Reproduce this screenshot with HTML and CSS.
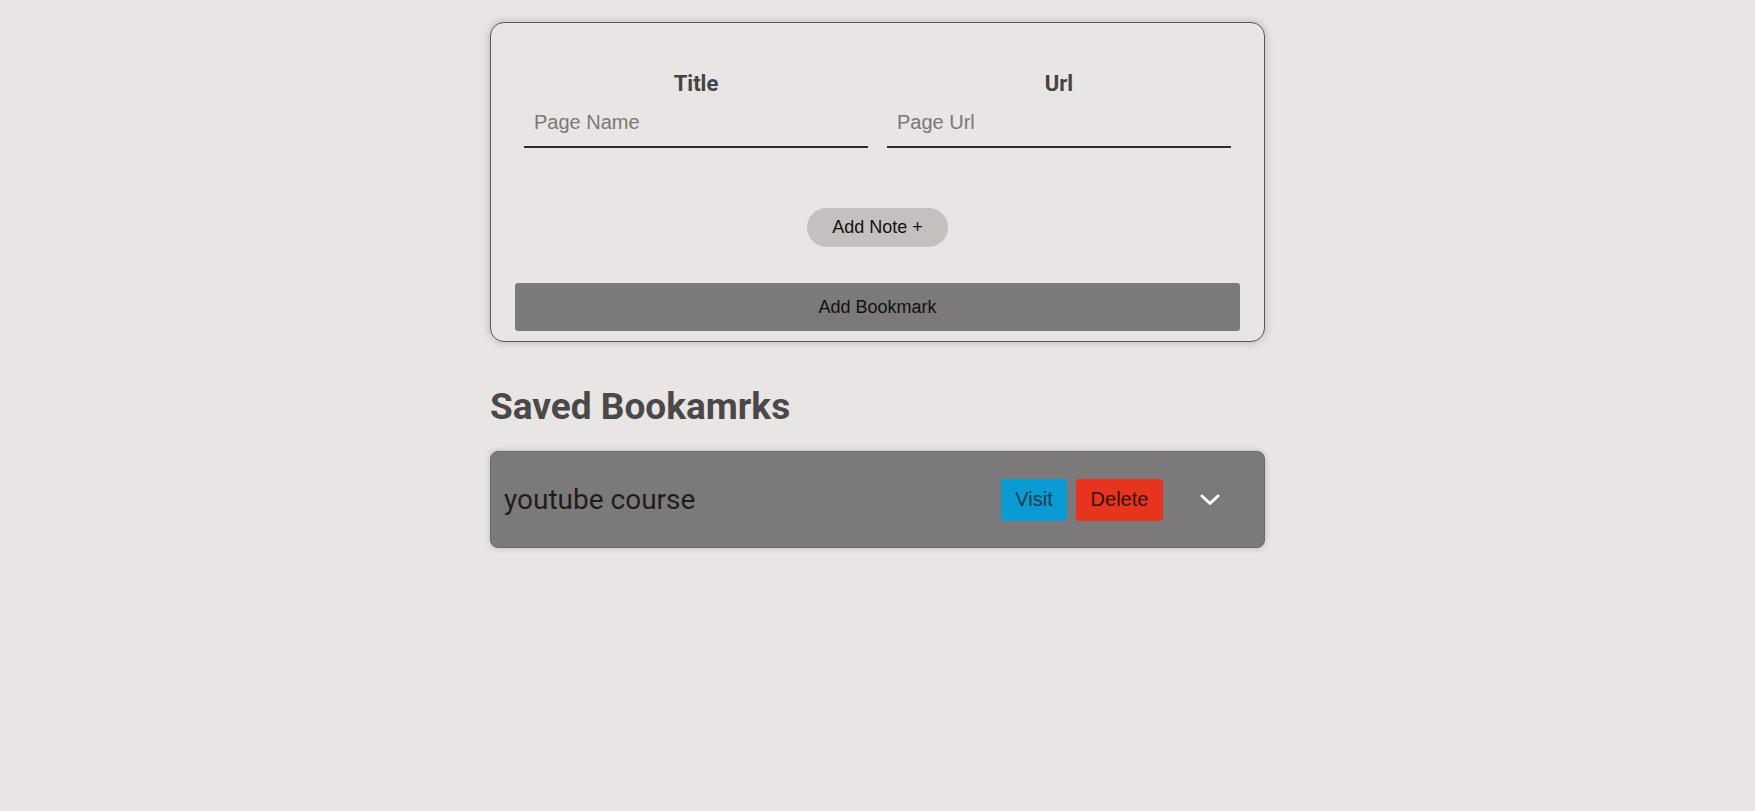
FILE: index.html
```html
<!DOCTYPE html>
<html lang="en">
<head>
<meta charset="utf-8">
<title>Bookmarks</title>
<link rel="stylesheet" href="styles.css">
</head>
<body>
<main class="page">
  <form class="card">
    <div class="fields">
      <label class="field">
        <span class="field-label">Title</span>
        <input class="field-input" type="text" placeholder="Page Name">
      </label>
      <label class="field">
        <span class="field-label">Url</span>
        <input class="field-input" type="text" placeholder="Page Url">
      </label>
    </div>
    <div class="note-row">
      <button type="button" class="note-btn">Add Note +</button>
    </div>
    <button type="button" class="add-btn">Add Bookmark</button>
  </form>

  <h2 class="section-title">Saved Bookamrks</h2>

  <div class="bookmark">
    <span class="bookmark-name">youtube course</span>
    <div class="bookmark-actions">
      <button type="button" class="visit-btn">Visit</button>
      <button type="button" class="delete-btn">Delete</button>
    </div>
    <button type="button" class="toggle-btn" aria-label="Expand">
      <svg width="20" height="12" viewBox="0 0 20 12"><polyline points="2,2 10,9.5 18,2" fill="none" stroke="#ffffff" stroke-width="3" stroke-linecap="round" stroke-linejoin="round"/></svg>
    </button>
  </div>
</main>
</body>
</html>
```

FILE: styles.css
```css
* { box-sizing: border-box; }

html, body {
  margin: 0;
  padding: 0;
  background: #e8e5e4;
}

body {
  font-family: "Liberation Sans", Arial, sans-serif;
  min-height: 811px;
}

.page {
  width: 775px;
  margin: 0 auto;
  padding-top: 22px;
}

.card {
  display: flex;
  flex-direction: column;
  border: 1px solid #5a5858;
  border-radius: 14px;
  background: #e8e5e4;
  box-shadow: 0 0 8px rgba(0, 0, 0, 0.22);
  padding: 47px 24px 10px 24px;
}

.fields {
  display: flex;
  gap: 19px;
  padding: 0 9px;
}

.field {
  flex: 1;
  display: flex;
  flex-direction: column;
  align-items: stretch;
}

.field-label {
  font-family: Roboto, "Liberation Sans", sans-serif;
  font-weight: 700;
  font-size: 22px;
  line-height: 28px;
  color: #454343;
  text-align: center;
}

.field-input {
  height: 50px;
  border: none;
  border-bottom: 2px solid #2e2c2c;
  background: transparent;
  font-family: "Liberation Sans", Arial, sans-serif;
  font-size: 20px;
  padding: 0 10px;
  color: #333;
  outline: none;
}

.field-input::placeholder {
  color: #7a7878;
}

.note-row {
  display: flex;
  justify-content: center;
  margin-top: 60px;
}

.note-btn {
  width: 141px;
  height: 39px;
  border: none;
  border-radius: 20px;
  background: #c4c0bf;
  font-family: "Liberation Sans", Arial, sans-serif;
  font-size: 18px;
  color: #111;
  padding: 0;
}

.add-btn {
  margin-top: 36px;
  height: 48px;
  border: none;
  border-radius: 3px;
  background: #7b7979;
  font-family: "Liberation Sans", Arial, sans-serif;
  font-size: 18px;
  color: #111;
}

.section-title {
  font-family: Roboto, "Liberation Sans", sans-serif;
  font-weight: 700;
  font-size: 37px;
  line-height: 43px;
  color: #4a4848;
  margin: 43px 0 23px 0;
}

.bookmark {
  display: flex;
  align-items: center;
  height: 97px;
  background: #7b7979;
  border: 1px solid #6a6868;
  border-radius: 8px;
  box-shadow: 0 0 6px rgba(0, 0, 0, 0.2);
  padding: 0 44px 0 13px;
}

.bookmark-name {
  flex: 1;
  font-family: Roboto, "Liberation Sans", sans-serif;
  font-size: 28px;
  color: #1e1d1d;
}

.bookmark-actions {
  display: flex;
  gap: 9px;
}

.visit-btn,
.delete-btn {
  height: 42px;
  border: none;
  border-radius: 3px;
  font-family: "Liberation Sans", Arial, sans-serif;
  font-size: 20px;
  padding: 0 14px;
}

.visit-btn {
  width: 66px;
  background: #0b9bd3;
  color: #163a50;
}

.delete-btn {
  width: 87px;
  background: #e6341f;
  color: #3a0d07;
}

.toggle-btn {
  margin-left: 37px;
  width: 20px;
  height: 12px;
  padding: 0;
  border: none;
  background: transparent;
  display: flex;
}
```
